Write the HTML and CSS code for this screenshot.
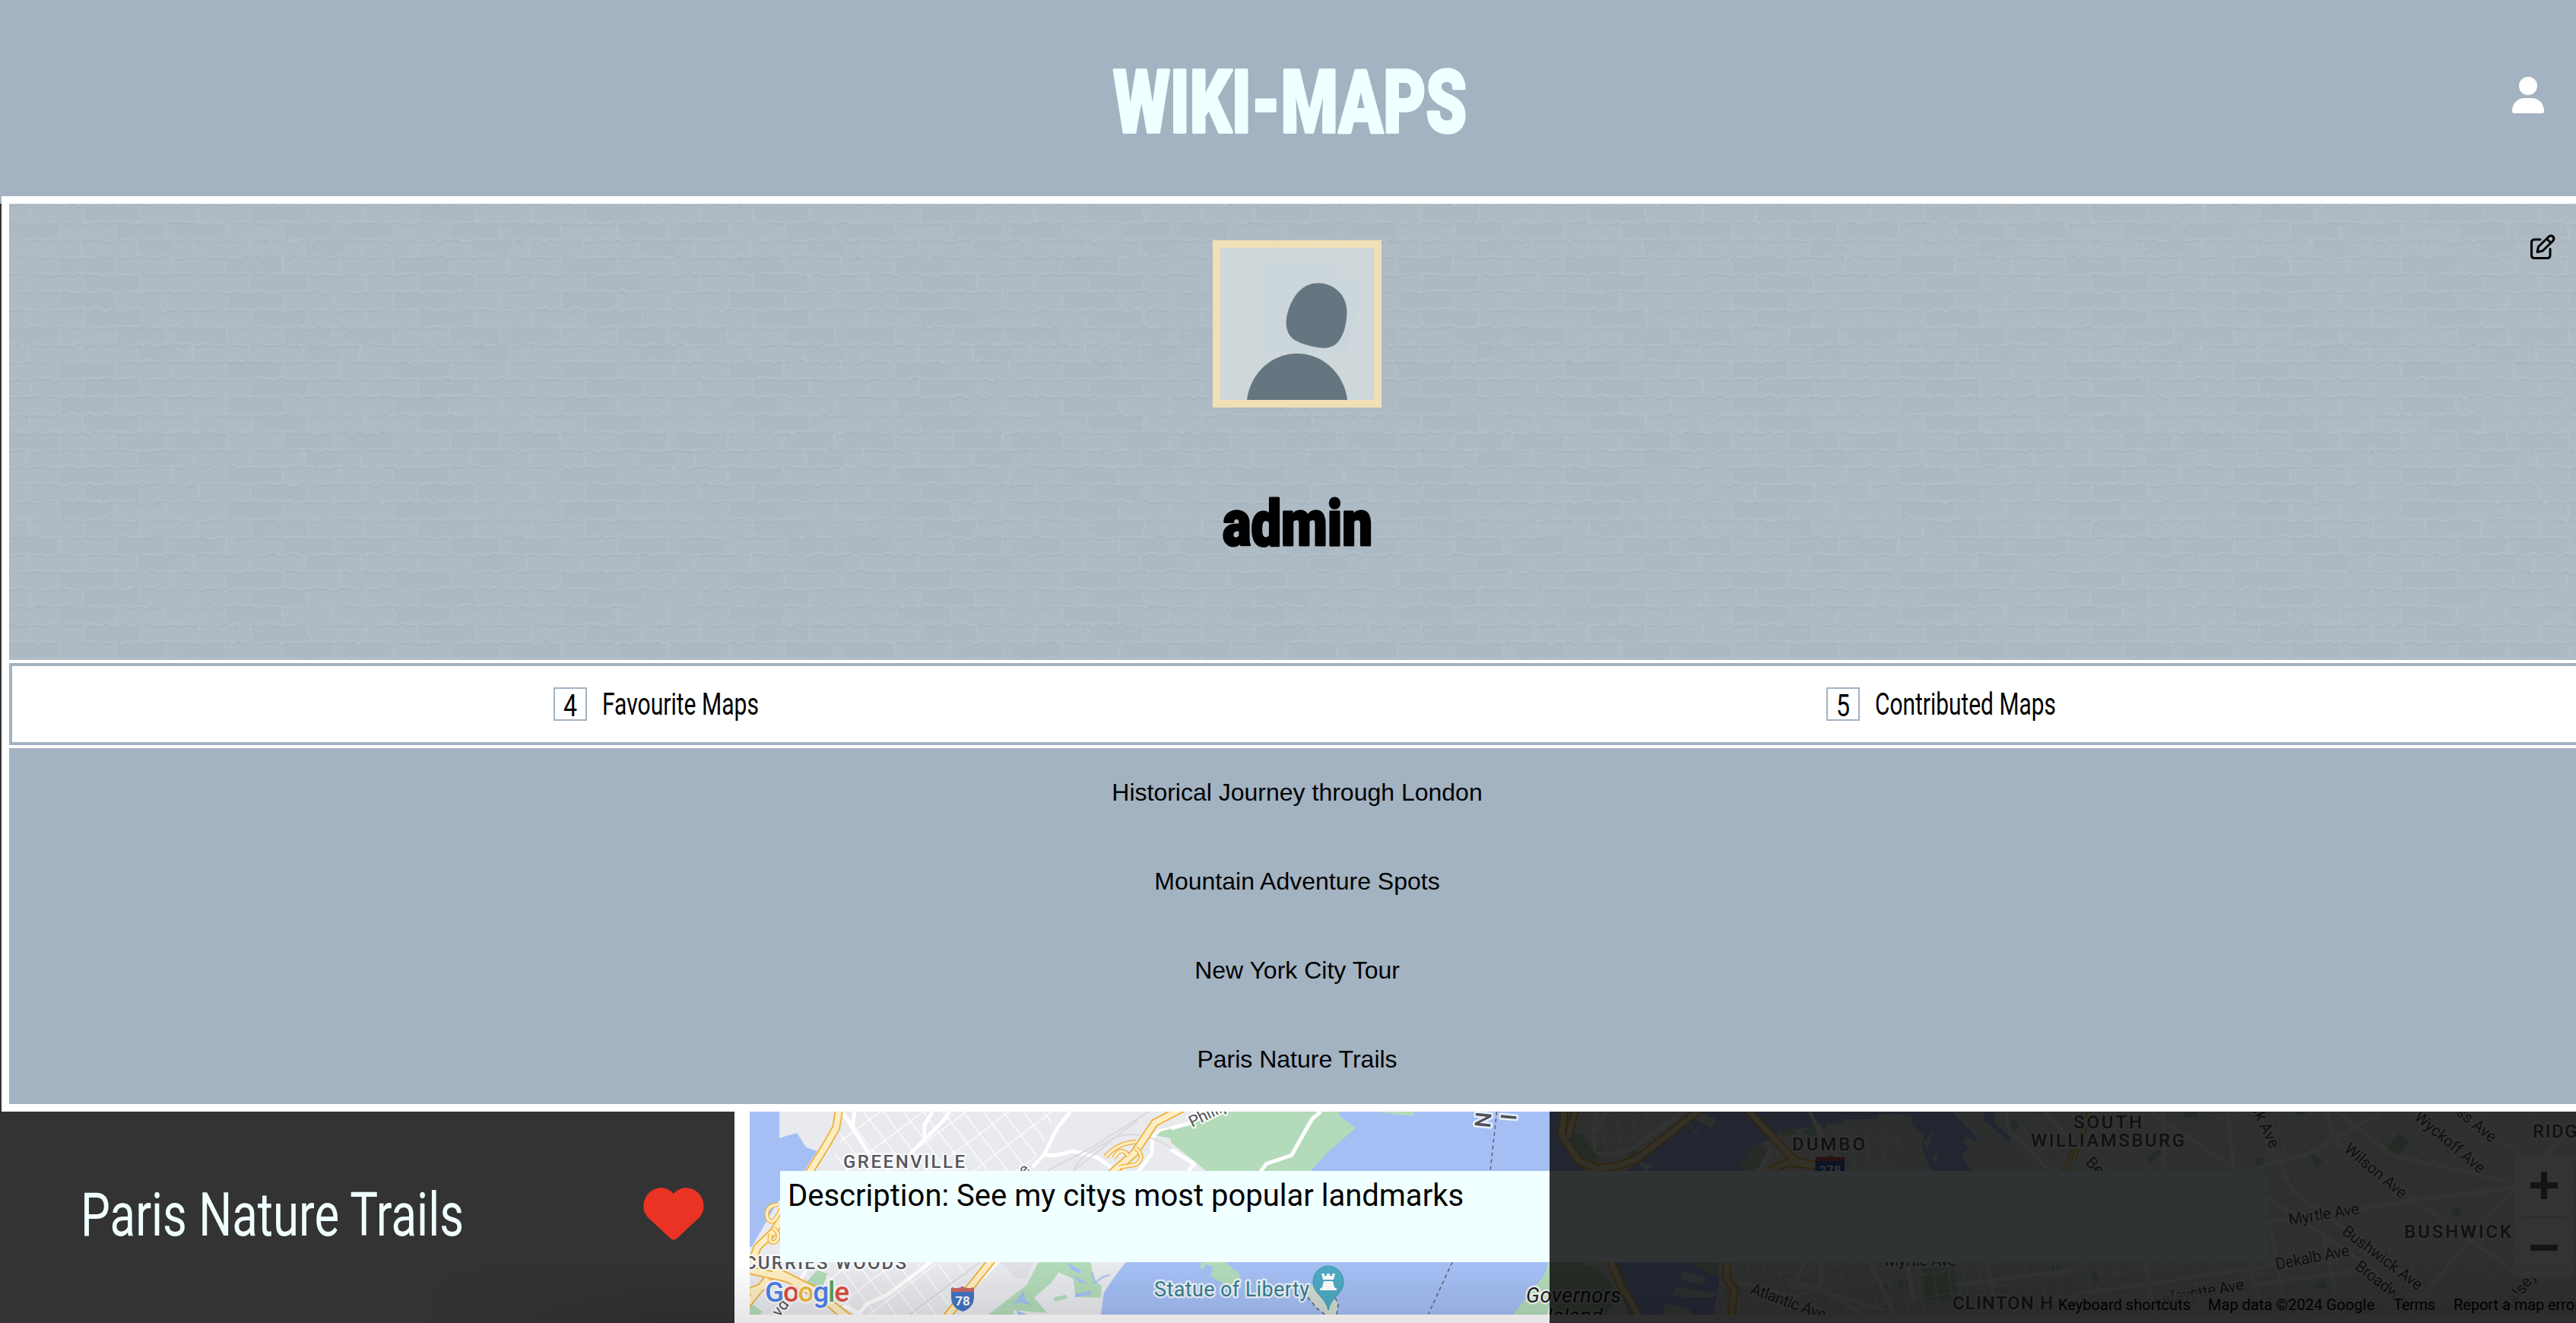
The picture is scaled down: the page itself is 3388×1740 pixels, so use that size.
FILE: index.html
```html
<!DOCTYPE html>
<html lang="en">
<head>
<meta charset="utf-8">
<title>Wiki-Maps</title>
<link rel="stylesheet" href="styles.css">
</head>
<body>
<header class="header">
  <h1 class="brand"><svg width="465" height="120"><text class="brand-text" x="0" y="101.500" textLength="465" lengthAdjust="spacingAndGlyphs">WIKI-MAPS</text></svg></h1>
  <svg class="user-icon" width="42" height="48" viewBox="0 0 42 48"><circle cx="21" cy="12" r="12"/><path d="M2.500 48Q0 48 0 45C0 35 7 28 17 28h8c10 0 17 7 17 17q0 3-2.500 3z"/></svg>
</header>

<main class="card">
  <section class="profile">
    <svg class="bricks" width="3388" height="600">
      <defs>
        <pattern id="brick" width="220" height="138" patternUnits="userSpaceOnUse">
          <rect width="220" height="138" fill="#aebbc4"/>
          <g fill="#acb9c3"><rect x="98" y="3" width="75" height="19"/><rect x="0" y="26" width="66" height="19"/><rect x="140" y="26" width="66" height="19"/><rect x="168" y="48" width="50" height="19"/><rect x="66" y="71" width="74" height="19"/><rect x="98" y="94" width="75" height="19"/><rect x="66" y="117" width="74" height="19"/></g>
          <path class="mortar-shade" d="M0 3.500H220M0 26.500H220M0 49.500H220M0 71.500H220M0 94.500H220M0 117.500H220"/>
          <path class="mortar" d="M0 1H220M0 24H220M0 47H220M0 69H220M0 92H220M0 115H220M28 2V23M98 2V23M173 2V23M66 26V45M140 26V45M206 26V45M23 49V67M96 49V67M168 49V67M65 71V90M140 71V90M215 71V90M29 94V113M98 94V113M173 94V113M66 117V136M140 117V136M206 117V136"/>
        </pattern>
        <filter id="rough" x="0" y="0" width="100%" height="100%"><feTurbulence type="fractalNoise" baseFrequency=".09" numOctaves="3" seed="4"/><feDisplacementMap in="SourceGraphic" scale="9" xChannelSelector="R" yChannelSelector="G"/></filter>
      </defs>
      <rect x="-10" y="-10" width="3410" height="620" fill="url(#brick)" filter="url(#rough)"/>
    </svg>
    <svg class="avatar" viewBox="195 108 606 600" preserveAspectRatio="none">
      <rect x="195" y="108" width="606" height="600" fill="#ced8da"/>
      <path d="M368 180H645V240H750V300L690 520H368z" fill="#cad6db"/>
      <path d="M455 400C457 350 485 300 505 280C530 255 555 247 583 247C650 250 693 300 694 355C696 400 683 455 657 482C635 503 610 505 585 502C540 495 500 482 480 466C460 447 454 425 455 400z" fill="#667681"/>
      <path d="M300 708C312 605 395 525 498 525S684 605 696 708z" fill="#667681"/>
    </svg>
    <h2 class="username"><svg width="200" height="100"><text class="username-text" x="2" y="75" textLength="197" lengthAdjust="spacingAndGlyphs">admin</text></svg></h2>
    <svg class="edit-icon" width="34" height="34" viewBox="0 0 34 34"><path d="M14 7H6.500Q2.500 7 2.500 11V27.500Q2.500 31.500 6.500 31.500H23Q27 31.500 27 27.500V19.500"/><path d="M10 23.500L11.500 16.500L25.500 3Q28 .9 30.500 3T31 8.500L17 22z"/><path d="M22.500 6L28 11.500"/></svg>
  </section>

  <nav class="tabs">
    <div class="tab"><span class="count"><svg width="40" height="40"><text class="tab-text" x="11" y="36" textLength="18" lengthAdjust="spacingAndGlyphs">4</text></svg></span><svg width="206" height="50"><text class="tab-text" x="-1" y="39" textLength="206" lengthAdjust="spacingAndGlyphs">Favourite Maps</text></svg></div>
    <div class="tab"><span class="count"><svg width="40" height="40"><text class="tab-text" x="11" y="36" textLength="18" lengthAdjust="spacingAndGlyphs">5</text></svg></span><svg width="238" height="50"><text class="tab-text" x="-1" y="39" textLength="238" lengthAdjust="spacingAndGlyphs">Contributed Maps</text></svg></div>
  </nav>

  <ul class="map-list">
    <li>Historical Journey through London</li>
    <li>Mountain Adventure Spots</li>
    <li>New York City Tour</li>
    <li>Paris Nature Trails</li>
  </ul>
</main>

<section class="entry">
  <div class="entry-title">
    <svg width="502" height="110"><text class="entry-name" x="-4" y="80" textLength="504" lengthAdjust="spacingAndGlyphs">Paris Nature Trails</text></svg>
    <svg class="heart" width="80" height="69" viewBox="0 0 80 69"><path d="M40 8C47 0 58-2 67 3C80 10 84 28 74 39L44 67Q40 70 36 67L6 39C-4 28 0 10 13 3C22-2 33 0 40 8z"/></svg>
  </div>
  <div class="map-wrap">
    <svg class="map" width="2402" height="267" viewBox="986 1462 2402 267">
      <defs>
        <pattern id="blocks" width="21" height="34" patternUnits="userSpaceOnUse" patternTransform="rotate(-37)"><path class="street" d="M0 0H21M0 0V34"/></pattern>
        <pattern id="blocks2" width="19" height="40" patternUnits="userSpaceOnUse" patternTransform="rotate(35)"><path class="street" d="M0 0H19M0 0V40"/></pattern>
        <pattern id="blocks3" width="20" height="30" patternUnits="userSpaceOnUse" patternTransform="rotate(-9)"><path class="street" d="M0 0H20M0 0V30"/></pattern>
      </defs>
      <rect x="986" y="1462" width="2402" height="267" fill="#e9eaee"/>

      <!-- New Jersey shore -->
      <g transform="translate(960 1440) scale(.3827 .33333)">
        <path class="water" d="M68 66H170V170L230 150L262 207L300 221L250 310L160 430L75 600H68z"/>
        <path fill="url(#blocks)" transform="scale(2.613 3)" d="M149 22H430L405 78L385 102L130 102L145 60zM85 242L120 222H315L283 289H165z"/>
        <path class="lane" d="M385 66L480 235M428 66L420 130M755 66L735 100L620 232M697 66L668 120V175M1170 66L1125 130L1080 235L1040 285M1080 235L1110 240L1180 222L1260 245L1310 285M1568 122L1470 145L1452 170L1450 230L1400 310M920 660L740 870M262 690L210 790M440 870L470 825L540 790L690 660M390 830L450 866"/>
        <path class="rail" d="M1440 66L1240 210L1090 300M1400 100L1180 300M860 660L620 866M1568 250Q1400 100 1290 190Q1200 240 1180 300"/>
        <path fill="#dfe1e5" d="M930 660H1045L1020 725H985z"/>
        <path class="park" d="M1465 160L1480 145L1568 115V205L1510 170zM1060 660H1240L1250 730L1278 755L1275 800L1188 798L1180 725L1130 700L1105 740L1045 800L1090 860L975 850V867H888L1020 750zM1112 800L1155 788L1160 803L1115 816zM265 735L300 692L335 705L320 755L280 765zM68 818L112 855L100 867H68z"/>
        <path class="water" d="M1360 660H1570V867H1275L1285 780L1320 720zM1158 660L1205 690V706L1175 690zM1180 712L1232 745L1200 740zM1010 775L1015 810L1040 830L1000 820L975 822zM1190 785L1240 773V788L1184 798zM985 850L1020 867H990z"/>
        <path class="creek" d="M1245 700L1255 742L1280 720L1306 710"/>
        <path class="hwy-case" d="M375 60L365 130L330 200L270 310L150 540L95 600L75 660M1560 50L1460 110L1390 230L1310 310M905 645L745 875M60 690L200 725L330 810L410 880M150 690L290 770L400 880M60 780L150 740M60 825L130 725"/>
        <path class="hwy" d="M375 60L365 130L330 200L270 310L150 540L95 600L75 660M1560 50L1460 110L1390 230L1310 310M905 645L745 875M60 690L200 725L330 810L410 880M150 690L290 770L400 880M60 780L150 740M60 825L130 725"/>
        <path class="ramp-case" d="M165 432Q115 440 130 490Q150 520 175 450M150 525Q180 560 155 580Q130 590 140 550M1290 245Q1330 190 1395 185M1395 210Q1430 245 1395 275L1340 285M1320 250Q1340 200 1370 240"/>
        <path class="ramp" d="M165 432Q115 440 130 490Q150 520 175 450M150 525Q180 560 155 580Q130 590 140 550M1290 245Q1330 190 1395 185M1395 210Q1430 245 1395 275L1340 285M1320 250Q1340 200 1370 240"/>
      </g>

      <!-- Harbour -->
      <g transform="translate(1540 1440) scale(.3827 .33333)">
        <path class="water" d="M190 66H1420V867H-20V655H400V300H120z"/>
        <path class="park" d="M0 135L190 66H580V85L635 130L540 225L478 302H122L85 265L0 188zM710 66H835V82L780 78zM105 660H185L235 705L240 750H190L137 718L145 678L122 668L108 690L99 682zM1298 660H1400L1470 690L1520 750L1515 840L1490 867H1175L1260 745L1283 710z"/>
        <path class="lane" d="M515 66L485 95L455 155L415 238L328 272L308 302M0 132L70 110M0 215L80 272L60 300"/>
        <path d="M480 750L465 790L500 840L530 867H570L575 830L565 805z" fill="#cfdcd3"/>
        <path class="ferry" d="M480 750L465 790L500 840L530 867M565 800L575 830L570 867M1120 66L1098 295M967 660L885 864"/>
        <path fill="#e9eaee" d="M1340 66H1568V270L1470 290L1420 270L1390 160z"/>
        <path class="park" d="M1320 110L1345 150L1370 130L1395 220L1425 270L1465 285L1500 270V240L1455 230L1420 160L1375 140z"/>
        <path class="lane" d="M1465 66L1455 110V200L1480 235L1568 200M1500 240L1510 290"/>
      </g>

      <!-- East River and Brooklyn -->
      <g transform="translate(2100 1440) scale(.4209 .33333)">
        <path fill="#dfe7e5" d="M0 66H320L150 250L60 300H0zM700 300L720 66H1568V867H380L400 700L290 660V300z"/>
        <path class="water" d="M325 66H735L720 110L580 150L500 200L450 270L470 300H85L130 265zM680 66H990L1050 140L1020 190L1075 300L1045 300L1015 200L1025 155L985 120L990 90L940 75L880 78L875 95L770 97L765 112L720 115L710 140zM985 66H1110L1190 170L1185 183L1155 165L1145 185L1163 215L1140 235L1170 300H1050L1075 210L1050 245L1030 230L1055 137L1020 160L985 110zM1210 66H1243V110L1290 165V190L1210 100zM40 655H295L385 715L365 867H100z"/>
        <path fill="#dfe7e5" d="M270 693L340 720L330 750L262 725zM245 760L372 780L365 800L235 795zM215 822L295 850L290 867H205zM305 95L330 70L375 95L360 130zM285 115L320 155L310 158zM130 265L182 280L150 300z"/>
        <path class="park" d="M490 195L540 215L505 285L480 300L447 280zM560 140L618 130V155L580 165zM640 150L670 120L690 130L680 165zM0 200L40 240L0 245zM110 200L132 225L120 255L95 255zM290 660H375L380 700L360 715zM1015 680H1120L1128 805L1030 808zM945 725L975 730L970 770L942 750zM900 725L915 770L895 775zM1285 105L1310 95L1320 120L1300 140zM1420 675H1440L1445 700H1425z"/>
        <path fill="url(#blocks3)" transform="scale(2.376 3)" d="M0 22L120 22L50 82H0zM300 50H400L390 100H298zM165 220H660V289H158z"/>
        <path fill="url(#blocks)" transform="scale(2.376 3)" d="M540 22H660V100H598z"/>
        <path class="lane" d="M665 66L710 180L750 240M1280 66L1290 140L1415 300M1400 66L1568 300M545 210L510 300M30 66L0 140M270 66L110 215L40 235L0 230M650 660L600 800L560 867M855 660L930 867M970 660L990 820M1220 660L1245 820M700 660V740L690 770M600 730L900 850M440 740L640 800M640 760L700 770L840 867M1120 750L1568 680"/>
        <path class="hwy-case" d="M330 50L130 250L70 280L0 290M465 50L620 260L760 300M540 300L600 265L680 280M40 645L75 750L135 880M410 645L405 720L430 770L420 880"/>
        <path class="hwy" d="M330 50L130 250L70 280L0 290M465 50L620 260L760 300M540 300L600 265L680 280M40 645L75 750L135 880M410 645L405 720L430 770L420 880"/>
        <path class="hwy-case" d="M-100 50L-110 160L-55 260L0 290M-65 50L-90 170"/>
        <path class="hwy" d="M-100 50L-110 160L-55 260L0 290M-65 50L-90 170"/>
        <path class="ramp-case" d="M1550 66L1460 300"/><path class="ramp" d="M1550 66L1460 300"/>
      </g>

      <g transform="translate(2728 1440) scale(.4209 .33333)">
        <rect x="0" y="66" width="1568" height="801" fill="#e3e8e8"/>
        <path fill="url(#blocks2)" transform="scale(2.376 3)" d="M250 22H660V289H440L340 190L250 100z"/>
        <path fill="url(#blocks3)" transform="scale(2.376 3)" d="M170 22H330V60L260 90L170 100zM0 215H250L255 150L300 170L420 289H0z"/>
        <path fill="url(#blocks)" transform="scale(2.376 3)" d="M0 22H115L200 100H0z"/>
        <path class="park" d="M1012 150L1048 180L1010 252L972 215zM735 225L777 255L755 295zM222 255L265 215L275 230L235 270zM342 66H385V88H345zM570 245L592 255L590 280H568zM690 66H735L700 80zM1190 440L1213 455L1195 483L1178 470zM870 615L892 630L880 652L866 640zM757 735H785L790 760L752 767zM50 700H70L77 740H65z"/>
        <path class="lane" d="M240 66L510 300M480 66L500 300L560 290L720 240L960 70M790 66L810 180L1080 430L1390 710M600 180L690 390L900 580L1120 790M820 66L1000 240L1350 340M0 785L240 745L630 670M220 640L245 867M545 650L575 800L640 867M600 400L860 620L1040 810M610 500L660 867M1190 66L1400 240M600 500L760 480L960 435L1380 365M1568 120L1390 340L1040 867M280 66V300M560 750L900 690M780 560L830 867"/>
        <path class="ramp-case" d="M50 60L0 250"/><path class="ramp" d="M50 60L0 250"/>
      </g>

      <!-- District and street names -->
      <g class="district">
        <text x="1109" y="1536" textLength="160">GREENVILLE</text><text x="979" y="1669" textLength="213">CURRIES WOODS</text>
        <text x="2357" y="1513" textLength="96">DUMBO</text><text x="2727" y="1484" textLength="90">SOUTH</text><text x="2671" y="1508" textLength="202">WILLIAMSBURG</text>
        <text x="2568" y="1722" textLength="132">CLINTON H</text><text x="3162" y="1628" textLength="141">BUSHWICK</text><text x="3331" y="1496" textLength="150">RIDGEWOOD</text>
      </g>
      <g class="road-name">
        <text transform="translate(1568 1483) rotate(-27)">Phillip St</text><text transform="translate(1348 1547) rotate(-48)">e</text><text transform="translate(1025 1733) rotate(-52)">vd</text>
        <text transform="translate(2479 1665)" textLength="94">Myrtle Ave</text><text transform="translate(3011 1611) rotate(-9)" textLength="94">Myrtle Ave</text>
        <text transform="translate(2994 1670) rotate(-11)" textLength="99">Dekalb Ave</text><text transform="translate(2834 1717) rotate(-10)" textLength="120">Lafayette Ave</text>
        <text transform="translate(3082 1513) rotate(40)" textLength="100">Wilson Ave</text><text transform="translate(3174 1471) rotate(40)" textLength="114">Wyckoff Ave</text><text transform="translate(3229 1465) rotate(39)">ss Ave</text>
        <text transform="translate(3079 1622) rotate(37)" textLength="126">Bushwick Ave</text><text transform="translate(3096 1668) rotate(38)" textLength="88">Broadway</text>
        <text transform="translate(2960 1456) rotate(65)">ck Ave</text><text transform="translate(2301 1701) rotate(20)" textLength="104">Atlantic Ave</text><text transform="translate(2742 1530) rotate(45)">Bedford</text><text transform="translate(3298 1728) rotate(-52)">Halsey</text>
        <text class="ny" transform="translate(1960 1484) rotate(-85)">N</text><text class="ny" transform="translate(1994 1474) rotate(-85)">I</text>
      </g>
      <g class="island"><text x="2007" y="1713" textLength="125">Governors</text><text x="2035" y="1740" textLength="73">Island</text></g>
      <text class="poi" x="1518" y="1705" textLength="204">Statue of Liberty</text>
      <path d="M1747 1723C1744 1706 1727 1702 1727 1686A20 21 0 0 1 1767 1686C1767 1702 1750 1706 1747 1723z" fill="#4eacc4" stroke="#3996ae"/>
      <path d="M1738 1675h4v3h3v-3h4v3h3v-3h4l-2 8h-14zM1741 1685h12l2 8l3 2v2h-22v-2l3-2z" fill="#fff"/>
      <path d="M1251 1694Q1259 1696 1266 1692Q1273 1696 1281 1694V1706Q1281 1720 1266 1725Q1251 1720 1251 1706z" fill="#4375c4"/><path d="M1252 1693Q1260 1696 1266 1692Q1272 1696 1280 1693V1699H1252z" fill="#cc6660"/><text class="shield" x="1266" y="1717" text-anchor="middle">78</text>
      <path d="M2388 1521Q2400 1524 2407 1520Q2415 1524 2426 1521V1560H2387z" fill="#2d65bd"/><path d="M2388 1521Q2400 1524 2407 1520Q2415 1524 2426 1521V1527H2388z" fill="#d0504b"/><text class="shield" x="2407" y="1545" text-anchor="middle">278</text>
      <text class="google" x="1006" y="1712" textLength="111"><tspan fill="#4e80ea">G</tspan><tspan fill="#dd4f42">o</tspan><tspan fill="#edbd3b">o</tspan><tspan fill="#4e80ea">g</tspan><tspan fill="#58a55c">l</tspan><tspan fill="#dd4f42">e</tspan></text>
      <rect x="3306" y="1519" width="80" height="162" fill="#fff"/>
      <path d="M3316 1600H3376" stroke="#e6e6e6" stroke-width="2"/><path d="M3328 1559H3364M3346 1541V1577M3328 1641H3364" stroke="#666" stroke-width="8"/>
      <rect x="2703" y="1701" width="685" height="28" fill="#f5f5f5" opacity=".7"/>
      <g class="legal"><text x="2707" y="1723" textLength="174">Keyboard shortcuts</text><text x="2904" y="1723" textLength="219">Map data ©2024 Google</text><text x="3148" y="1723" textLength="55">Terms</text><text x="3227" y="1723" textLength="166">Report a map error</text></g>
    </svg>
    <p class="description">Description: See my citys most popular landmarks</p>
    <div class="dim"></div>
  </div>
  <div class="fade"></div>
</section>
</body>
</html>
```
FILE: styles.css
```css
* { box-sizing: border-box; }
body { margin: 0; width: 3388px; height: 1740px; overflow: hidden; background: #333; font-family: "Liberation Sans", Arial, sans-serif; }
svg { display: block; flex: none; overflow: visible; }

.header { position: relative; display: flex; align-items: center; justify-content: center; height: 268px; padding: 0 0 4px 4px; background: #a3b3c2; }
.brand { margin: 0; }
.brand-text { font: 900 115px Roboto, sans-serif; fill: #f0ffff; stroke: #f0ffff; stroke-width: 3.500px; stroke-linejoin: round; }
.user-icon { position: absolute; right: 42px; top: 101px; fill: #fff; }

.card { position: relative; width: 3408px; height: 1204px; margin: -10px 0 0 2px; border: 10px solid #fff; background: #fff; display: flex; flex-direction: column; gap: 4px; }
.profile { position: relative; height: 600px; overflow: hidden; background: #adbac4; display: flex; flex-direction: column; align-items: center; padding-top: 48px; }
.bricks { position: absolute; inset: 0; }
.mortar { fill: none; stroke: #b4bec6; stroke-width: 2.200; }
.mortar-shade { fill: none; stroke: #a6b4bf; stroke-width: 1.500; }
.avatar { position: relative; width: 222px; height: 220px; border: 10px solid #f1dfb7; overflow: hidden; }
.username { position: relative; margin: 106px 0 0; }
.username-text { font: 900 84px Roboto, sans-serif; stroke: #000; stroke-width: 3px; stroke-linejoin: round; }
.edit-icon { position: absolute; left: 3315px; top: 40px; fill: none; stroke: #000; stroke-width: 3; stroke-linecap: round; stroke-linejoin: round; }

.tabs { display: flex; height: 108px; border: 4px solid #a3b3c2; }
.tab { flex: 1; display: flex; align-items: center; justify-content: center; gap: 21px; padding-left: 5px; }
.count { width: 44px; height: 44px; border: 2px solid #a3b3c2; }
.tab-text { font: 400 40px Roboto, sans-serif; }

.map-list { flex: 1; margin: 0; padding: 0; list-style: none; display: grid; grid-template-rows: repeat(4, 1fr); background: #a3b3c2; font-size: 32px; }
.map-list li { display: flex; align-items: center; justify-content: center; }

.entry { position: relative; display: flex; gap: 20px; height: 278px; background: #fff; }
.entry-title { width: 966px; background: #333; display: flex; justify-content: space-between; padding: 83px 40px 0 110px; }
.entry-name { font: 400 80px Roboto, sans-serif; fill: #f0ffff; }
.heart { margin-top: 17px; fill: #ea3323; }
.map-wrap { position: relative; width: 2402px; height: 278px; }
.map { overflow: hidden; }
.description { position: absolute; left: 40px; top: 78px; width: 1957px; height: 120px; margin: 0; padding: 9px 10px; background: #f0ffff; font: 40px/47px Roboto, sans-serif; white-space: nowrap; }
.dim { position: absolute; left: 1052px; top: 0; right: 0; bottom: 0; background: rgba(0, 0, 0, .8); }
.fade { position: absolute; left: 560px; right: 0; bottom: 0; height: 80px; background: linear-gradient(transparent, rgba(0, 0, 0, .1)); -webkit-mask-image: linear-gradient(90deg, transparent, #000 300px); mask-image: linear-gradient(90deg, transparent, #000 300px); }

.map path { vector-effect: non-scaling-stroke; }
.water { fill: #a5bff5; }
.park { fill: #b3dbb9; }
.street { fill: none; stroke: #fff; stroke-width: 2.500; }
.lane { fill: none; stroke: #fff; stroke-width: 5; stroke-linejoin: round; }
.rail { fill: none; stroke: #d7d9dd; stroke-width: 2; }
.creek { fill: none; stroke: #a5bff5; stroke-width: 2; }
.ferry { fill: none; stroke: #5c6370; stroke-width: 1.500; stroke-dasharray: 5 4; }
.hwy-case { fill: none; stroke: #efae35; stroke-width: 11; stroke-linejoin: round; }
.hwy { fill: none; stroke: #fdeec2; stroke-width: 7.500; stroke-linejoin: round; }
.ramp-case { fill: none; stroke: #efae35; stroke-width: 6; }
.ramp { fill: none; stroke: #fdeec2; stroke-width: 3.500; }
.map text { font-family: Roboto, sans-serif; paint-order: stroke; stroke: rgba(255, 255, 255, .75); stroke-width: 5px; stroke-linejoin: round; }
.district { font-size: 24px; font-weight: 500; fill: #54565d; }
.road-name { font-size: 21px; fill: #505257; }
.map .ny { font-size: 29px; font-weight: 500; }
.island { font-size: 27px; font-style: italic; fill: #222; }
.poi { font-size: 27px; fill: #37808c; }
.map .shield { font-size: 17px; font-weight: 700; fill: #fff; stroke: none; }
.google { font-size: 37px; font-weight: 500; }
.map .legal text { font-size: 20px; fill: #000; stroke: none; }
```
